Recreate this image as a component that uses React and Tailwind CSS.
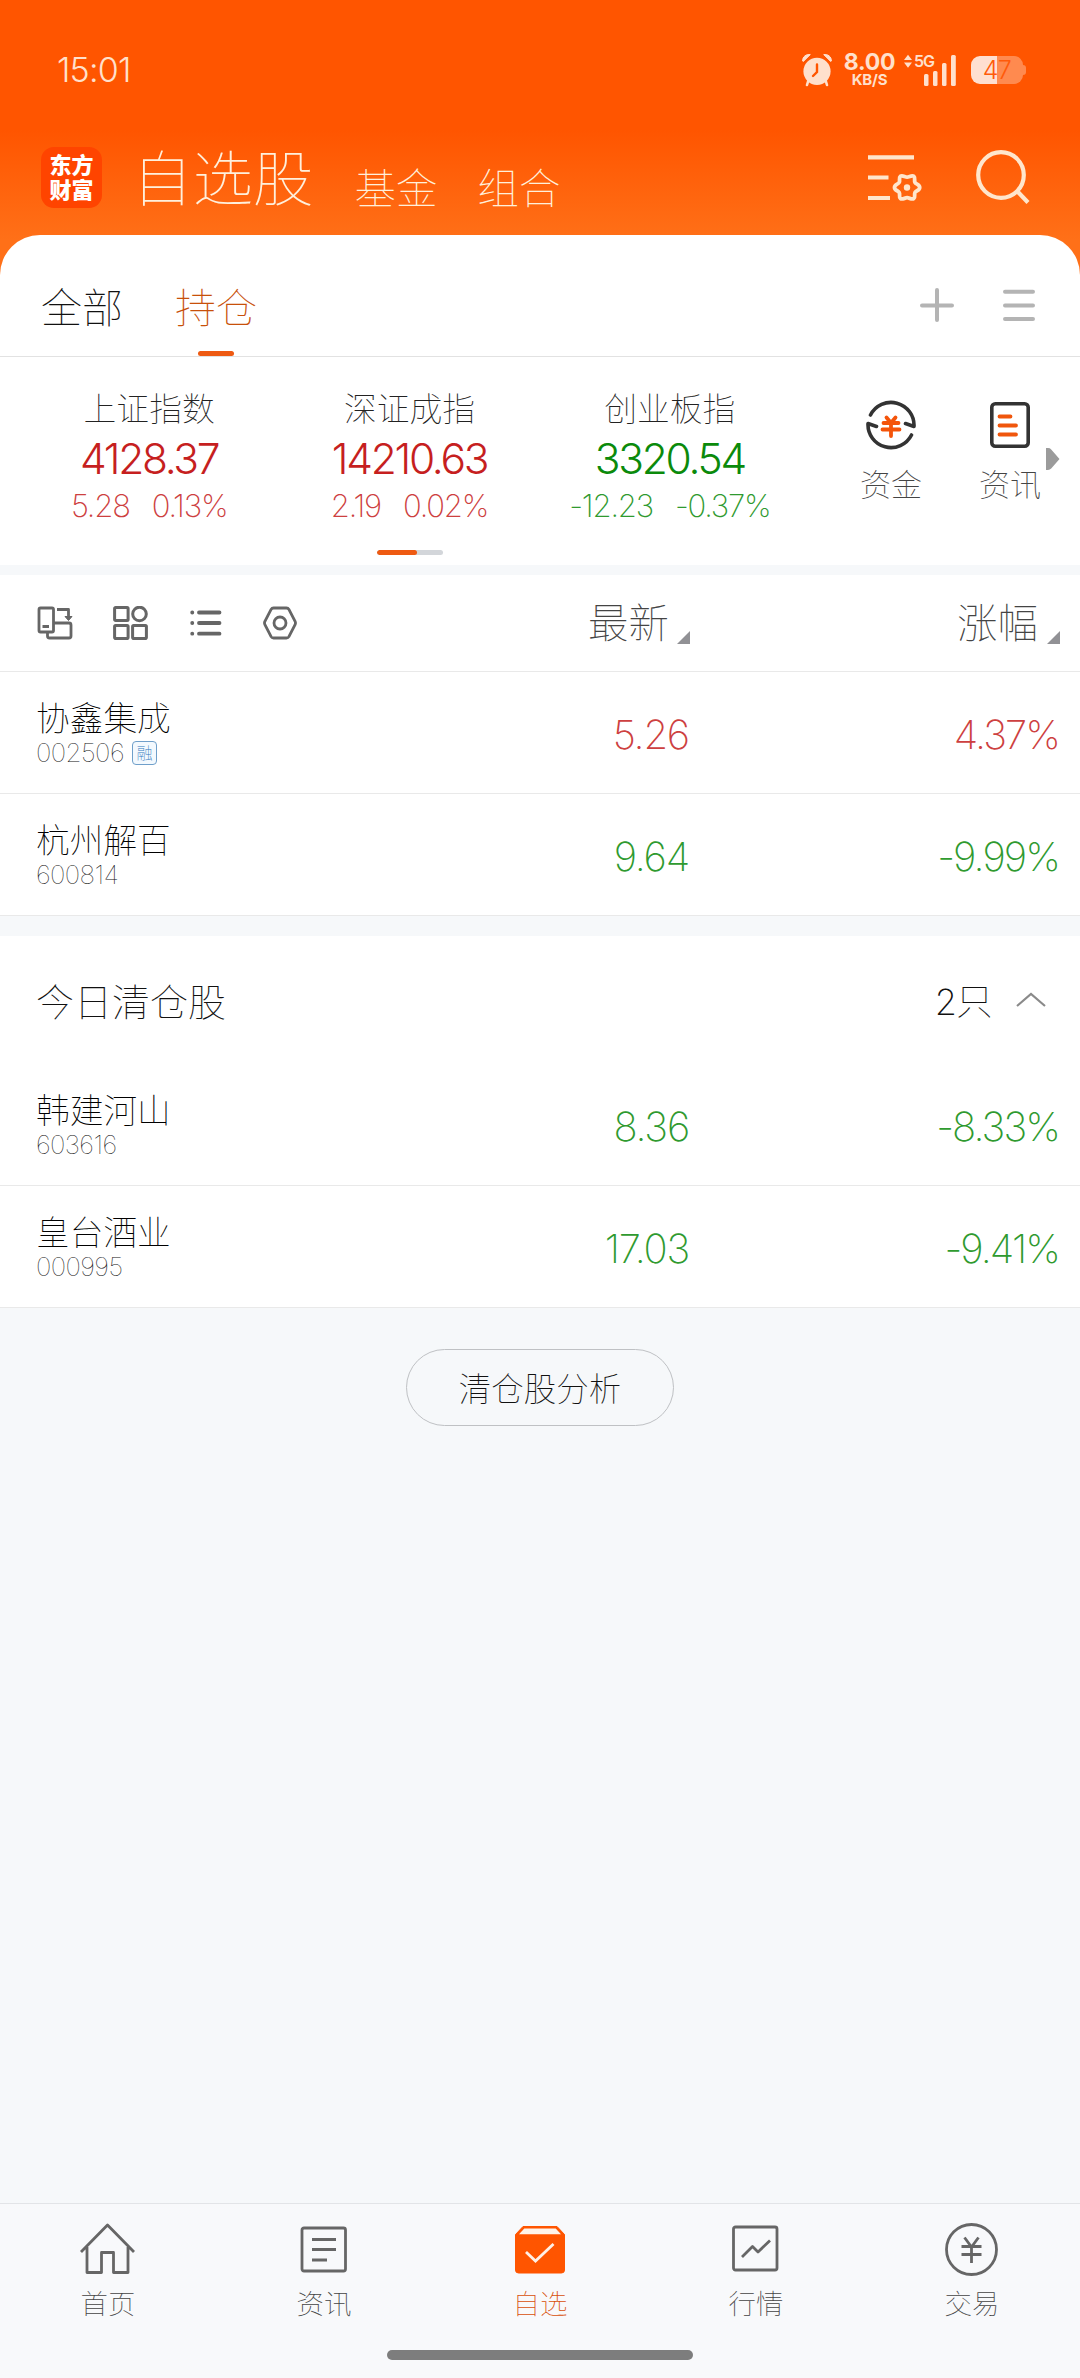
import React from "react";

const CJK = "font-['Inter','Noto_Sans_CJK_SC',sans-serif]";
const RED = "text-[#c61f1f]";
const GREEN = "text-[#0b8a0b]";
const SOFT_RED = "text-[#cd4040]";
const SOFT_GREEN = "text-[#2f9a2f]";

function StatusBar() {
  return (
    <div className="flex h-[139px] items-center pl-[57px] pr-[54px] text-[#ffe0cc]">
      <span className="text-[34px] leading-[40px] font-light tracking-[-0.8px]">15:01</span>
      <div className="ml-auto flex items-center">
        <svg width="32" height="34" viewBox="0 0 32 34" fill="none">
          <path d="M7.200 28 6 32M24.800 28l1.200 4" stroke="#ffe0cc" strokeWidth="2.600" strokeLinecap="round" />
          <path d="M1.600 8C1.500 3.500 5.500.8 9.300 1.600L2.400 8.400ZM30.400 8C30.500 3.500 26.500.8 22.700 1.600l6.900 6.800Z" fill="#ffe0cc" stroke="#ffe0cc" strokeLinejoin="round" />
          <circle cx="16" cy="18.300" r="13.600" fill="#ffe0cc" />
          <path d="M16 11.500v7.500l-4 4" stroke="#ff5500" strokeWidth="2.400" strokeLinecap="round" />
        </svg>
        <div className="ml-[11px] flex w-[51px] flex-col items-center">
          <span className="text-[23px] leading-[20px] font-bold tracking-[-0.2px] whitespace-nowrap">8.00</span>
          <span className="text-[15px] leading-[15px] font-bold tracking-[-0.2px]">KB/S</span>
        </div>
        <div className="relative ml-[9px] h-[34px] w-[53px]">
          <svg width="53" height="34" viewBox="0 0 53 34" fill="#ffe0cc">
            <path d="M0 7 4 1.800 8 7ZM0 9.500h8L4 14.700Z" />
            <rect x="20" y="21" width="4.500" height="12" rx="1.500" />
            <rect x="29" y="18" width="4.500" height="15" rx="1.500" />
            <rect x="38" y="10" width="4.500" height="23" rx="1.500" />
            <rect x="47" y="2" width="4.800" height="31" rx="1.500" />
          </svg>
          <span className="absolute top-0 left-[10px] text-[16px] leading-[16px] font-semibold tracking-[-1px]">5G</span>
        </div>
        <div className="ml-[14px] flex items-center">
          <div className="flex h-[28px] w-[52px] items-center justify-center rounded-[9px] bg-[linear-gradient(90deg,#ffdfd0_50%,#ff8a4f_50%)] text-[25px] leading-[28px] font-light tracking-[-0.5px] text-[#ff5a0a]">47</div>
          <div className="h-[10px] w-[3px] rounded-r-[3px] bg-[#ff8a4f]" />
        </div>
      </div>
    </div>
  );
}

function Header() {
  return (
    <div className="flex h-[96px] pl-[41px] pr-[49px] text-[#fff0dc]">
      <div className="mt-[8px] flex h-[61px] w-[61px] shrink-0 flex-col items-center justify-center rounded-[13px] bg-[#ff4400] text-[22px] leading-[25px] font-black text-white">
        <span>东方</span>
        <span>财富</span>
      </div>
      <span className="ml-[30px] text-[60.500px] leading-[80px] font-thin whitespace-nowrap">自选股</span>
      <span className="mt-[25px] ml-[41px] text-[41.500px] leading-[50px] font-thin whitespace-nowrap">基金</span>
      <span className="mt-[25px] ml-[40px] text-[41.500px] leading-[50px] font-thin whitespace-nowrap">组合</span>
      <svg className="mt-[14px] ml-auto" width="54" height="50" viewBox="0 0 54 50" fill="none" stroke="#ffe6cc" strokeWidth="4.200">
        <path d="M0 4.300h46M0 24.500h20.500M0 45h22" />
        <path d="M31.900 22.900c1.900-1.500 4.500.8 6.700.8s4.800-2.300 6.700-.8 0 4.200 1.200 6.100 4.700 1.900 4.700 5-3.600 3.100-4.700 5 .7 4.600-1.200 6.100-4.500-.8-6.700-.8-4.800 2.300-6.700.8 0-4.200-1.200-6.100-4.700-1.900-4.700-5 3.600-3.100 4.700-5-.7-4.600 1.200-6.100Z" strokeWidth="3.800" transform="translate(0.500 0.400)" />
        <circle cx="39" cy="34.500" r="3.200" fill="#ffe6cc" stroke="none" />
      </svg>
      <svg className="mt-[10px] ml-[54px]" width="55" height="56" viewBox="0 0 55 56" fill="none" stroke="#ffe6cc" strokeWidth="4.200">
        <circle cx="25" cy="26" r="22.800" />
        <path d="m41 42 11 11.500" />
      </svg>
    </div>
  );
}

function Tabs() {
  return (
    <div className="flex h-[122px] border-b border-[#e2e2e2] pl-[41px] pr-[45px] text-[41px] leading-[60px] font-thin">
      <span className="mt-[43px] text-[#111]">全部</span>
      <div className="ml-[52px] flex flex-col items-center text-[#c8500a]">
        <span className="mt-[43px]">持仓</span>
        <div className="mt-[13px] h-[5px] w-[36px] rounded-full bg-[#ee5a12]" />
      </div>
      <svg className="mt-[53px] ml-auto" width="34" height="34" viewBox="0 0 34 34" stroke="#b4b4b4" strokeWidth="4" strokeLinecap="round">
        <path d="M2 17.500h30M17 2v30" />
      </svg>
      <svg className="mt-[53px] ml-[49px]" width="32" height="34" viewBox="0 0 32 34" stroke="#b4b4b4" strokeWidth="4" strokeLinecap="round">
        <path d="M2 3.700h28M2 17.500h28M2 31h28" />
      </svg>
    </div>
  );
}

const indices = [
  { name: "上证指数", value: "4128.37", diff: "5.28", pct: "0.13%", color: RED, soft: SOFT_RED },
  { name: "深证成指", value: "14210.63", diff: "2.19", pct: "0.02%", color: RED, soft: SOFT_RED },
  { name: "创业板指", value: "3320.54", diff: "-12.23", pct: "-0.37%", color: GREEN, soft: SOFT_GREEN },
];

function Indices() {
  return (
    <div className="flex h-[208px]">
      <div className="flex w-[800px] flex-col items-center pl-[19px]">
        <div className="grid w-full grid-cols-3 pt-[28px]">
          {indices.map((it) => (
            <div key={it.name} className="flex flex-col items-center whitespace-nowrap">
              <span className="mt-px text-[32.800px] leading-[47px] font-thin text-[#222]">{it.name}</span>
              <span className={`text-[42.500px] leading-[52px] font-light tracking-[-2.300px] ${it.color}`}>{it.value}</span>
              <span className={`flex gap-[22px] text-[31px] leading-[42px] font-extralight tracking-[-1.200px] ${it.soft}`}>
                <span>{it.diff}</span>
                <span>{it.pct}</span>
              </span>
            </div>
          ))}
        </div>
        <div className="mt-[23px] h-[5px] w-[66px] overflow-hidden rounded-full bg-[#d3d6da]">
          <div className="h-full w-[40px] rounded-full bg-[#ee5a12]" />
        </div>
      </div>
      <div className="ml-[60px] flex flex-col items-center">
        <svg className="mt-[43px]" width="50" height="50" viewBox="0 0 50 50" fill="none" stroke="#333" strokeWidth="3.600" strokeLinecap="round" strokeLinejoin="round">
          <path d="M4.500 15A23 23 0 0 1 48 26.500L39.500 23.500M45.500 35A23 23 0 0 1 2 23.500L10.500 26.500" />
          <path d="m20.500 17.500 4.500 5.500 4.500-5.500M17.500 23h15M16.500 29.500h17M25 23v13" stroke="#f4540a" strokeWidth="3.800" />
        </svg>
        <span className="mt-[17px] text-[31px] leading-[36px] font-thin text-[#444]">资金</span>
      </div>
      <div className="ml-[57px] flex flex-col items-center">
        <svg className="mt-[45px]" width="40" height="46" viewBox="0 0 40 46" fill="none" stroke="#333" strokeWidth="3.600" strokeLinecap="round">
          <rect x="1.800" y="1.800" width="36.400" height="42.400" rx="3.500" />
          <path d="M9.500 14.500h11M9.500 23.500h16.500M9.500 32.500h16.500" stroke="#f0560c" strokeWidth="3.800" />
        </svg>
        <span className="mt-[19px] text-[31px] leading-[36px] font-thin text-[#444]">资讯</span>
      </div>
      <svg className="mt-[91px] ml-[5px]" width="14" height="22" viewBox="0 0 14 22" fill="#9b9b9b">
        <path d="M0 0h2q2 0 3.200 1.400L13.500 11 5.200 20.600Q4 22 2 22H0Z" />
      </svg>
    </div>
  );
}

function Corner() {
  return (
    <svg className="mt-[56px]" width="13" height="13" viewBox="0 0 13 13" fill="#919195">
      <path d="M13 0v13H0Z" />
    </svg>
  );
}

function Toolbar() {
  return (
    <div className="flex h-[97px] border-b border-[#e9e9e9] pl-[37px] pr-[20px] text-[40.500px] leading-[60px] font-thin text-[#444]">
      <div className="flex gap-[40px] pt-[31px]">
        <svg width="36" height="34" viewBox="0 0 36 34" fill="none" stroke="#666" strokeWidth="2.800" strokeLinejoin="round">
          <rect x="2" y="2" width="14.500" height="24" rx="1.500" />
          <path d="M5.500 20.500h6.500M20 3.500h11.500v9M10.500 26.500V30q0 2 2 2H32q2 0 2-2V19q0-2-2-2H17" />
          <path d="m28 10.500 3.500 4 3.500-4Z" fill="#666" strokeWidth="1" />
        </svg>
        <svg width="35" height="34" viewBox="0 0 35 34" fill="none" stroke="#666" strokeWidth="3">
          <rect x="1.600" y="1.600" width="13.500" height="13" rx="1" />
          <circle cx="26.500" cy="8" r="6.800" />
          <rect x="1.600" y="19.600" width="13.500" height="13" rx="1" />
          <rect x="19.600" y="19.600" width="13.800" height="13" rx="1" />
        </svg>
        <svg className="ml-[2px]" width="32" height="34" viewBox="0 0 32 34" stroke="#666" strokeWidth="3.800" strokeLinecap="round">
          <path d="M2.200 6.500h.1M2.200 17h.1M2.200 27.700h.1M9 6.500h20.500M9 17h20.500M9 27.700h20.500" />
        </svg>
        <svg className="ml-[1px]" width="34" height="34" viewBox="0 0 34 34" fill="none" stroke="#666" strokeWidth="2.800" strokeLinejoin="round">
          <path d="M10.500 2h13q1.600 0 2.400 1.400l6.200 12q.8 1.600 0 3.200l-6.200 12q-.8 1.400-2.400 1.400h-13q-1.600 0-2.400-1.400l-6.200-12q-.8-1.600 0-3.200l6.200-12Q8.900 2 10.500 2Z" />
          <circle cx="17" cy="17" r="6" />
        </svg>
      </div>
      <div className="ml-auto flex w-[363px]">
        <span className="mt-[19px] w-[89px] whitespace-nowrap">最新</span>
        <Corner />
      </div>
      <div className="ml-[6px] flex">
        <span className="mt-[19px] mr-[9px] whitespace-nowrap">涨幅</span>
        <Corner />
      </div>
    </div>
  );
}

function StockRow({ name, code, tag, price, pct, color }) {
  return (
    <div className="flex h-[122px] border-b border-[#e9e9e9] pr-[21px] pl-[36px]">
      <div className="flex w-[254px] flex-col pt-[25px]">
        <span className="text-[33.700px] leading-[43px] font-thin text-black">{name}</span>
        <div className="flex items-center">
          <span className="w-[96px] text-[26px] leading-[26px] font-thin tracking-[-0.600px] text-[#111]">{code}</span>
          {tag && (
            <span className="flex h-[24px] w-[25px] items-center justify-center rounded-[4px] border border-[#6f9fca] bg-[#f3f9fe] text-[16px] leading-[22px] font-thin text-[#2f78bd]">{tag}</span>
          )}
        </div>
      </div>
      <span className={`w-[399px] pt-[33px] text-right text-[40px] leading-[60px] font-extralight tracking-[-1.200px] ${color}`}>{price}</span>
      <span className={`ml-auto pt-[33px] text-right text-[40px] leading-[60px] font-extralight tracking-[-1.900px] ${color}`}>{pct}</span>
    </div>
  );
}

function NavItem({ label, active, children }) {
  return (
    <div className="flex flex-1 flex-col items-center">
      <svg className="mt-[17px]" width="56" height="56" viewBox="0 0 56 56" fill="none" stroke="#666" strokeWidth="2.800" strokeLinejoin="round">
        {children}
      </svg>
      <span className={`mt-[9px] text-[27.500px] leading-[36px] font-thin ${active ? "text-[#d9500a]" : "text-[#444]"}`}>{label}</span>
    </div>
  );
}

function BottomNav() {
  return (
    <div className="mt-auto flex h-[175px] flex-col items-center border-t border-[#e2e4e7] bg-[#f8f9fb]">
      <div className="flex w-full">
        <NavItem label="首页">
          <path d="M1 31 27.500 4 54 31M7 26v25.500h14.500v-20h12v20h14.500V26" />
        </NavItem>
        <NavItem label="资讯">
          <rect x="6" y="7" width="43.500" height="43" rx="2" />
          <path d="M16 18.500h24M16 28.500h24M16 39h15" />
        </NavItem>
        <NavItem label="自选" active>
          <path d="M3.500 13.500 11 5.500h34l7.500 8V49q0 3-3 3h-43q-3 0-3-3Z" fill="#ff5500" stroke="#ff5500" strokeWidth="1" />
          <path d="M7 13.300 12.300 7.500h31.400l5.300 5.800Z" fill="#fff4ea" stroke="none" />
          <path d="m14 31 9.500 9L41.500 23" stroke="#fff0e6" strokeLinejoin="miter" />
        </NavItem>
        <NavItem label="行情">
          <rect x="5.500" y="6" width="43.500" height="43" rx="2" />
          <path d="m14 36 10.500-10.500L30 31l12-11.500" />
        </NavItem>
        <NavItem label="交易">
          <circle cx="27.500" cy="28.500" r="25" strokeWidth="2.800" />
          <path d="m20.500 16.500 7 9.500 7-9.500M17.500 25.500h20M17.500 33.500h20M27.500 26v16" strokeLinejoin="miter" />
        </NavItem>
      </div>
      <div className="mt-[28px] h-[10px] w-[306px] rounded-full bg-[#7d7d7d]" />
    </div>
  );
}

export default function App() {
  return (
    <div className={`flex h-[2378px] w-[1080px] flex-col overflow-hidden bg-[#f6f8fa] ${CJK}`}>
      <div className="h-[275px] shrink-0 bg-[linear-gradient(180deg,#ff5500_0px,#ff5500_130px,#ff7018_240px)]">
        <StatusBar />
        <Header />
      </div>
      <div className="mt-[-40px] rounded-t-[40px] bg-white">
        <Tabs />
        <Indices />
      </div>
      <div className="mt-[10px] bg-white">
        <Toolbar />
        <StockRow name="协鑫集成" code="002506" tag="融" price="5.26" pct="4.37%" color={SOFT_RED} />
        <StockRow name="杭州解百" code="600814" price="9.64" pct="-9.99%" color={SOFT_GREEN} />
      </div>
      <div className="mt-[20px] bg-white">
        <div className="flex h-[128px] items-start pl-[36px] pr-[34px] font-thin">
          <span className="mt-[38px] text-[38px] leading-[56px] text-[#111]">今日清仓股</span>
          <span className="mt-[38px] ml-auto text-[36px] leading-[56px] tracking-[-0.5px] text-[#111]">
            <span className="font-extralight">2</span>只
          </span>
          <svg className="mt-[56px] ml-[24px]" width="30" height="15" viewBox="0 0 30 15" fill="none" stroke="#8a8a8a" strokeWidth="2.200">
            <path d="M1 14 15 2l14 12" />
          </svg>
        </div>
        <StockRow name="韩建河山" code="603616" price="8.36" pct="-8.33%" color={SOFT_GREEN} />
        <StockRow name="皇台酒业" code="000995" price="17.03" pct="-9.41%" color={SOFT_GREEN} />
      </div>
      <button className="mx-auto mt-[41px] flex h-[77px] w-[268px] items-center justify-center rounded-full border border-[#bfc1c4] pt-[4px] text-[32.500px] leading-[48px] font-thin text-[#111]">
        清仓股分析
      </button>
      <BottomNav />
    </div>
  );
}
